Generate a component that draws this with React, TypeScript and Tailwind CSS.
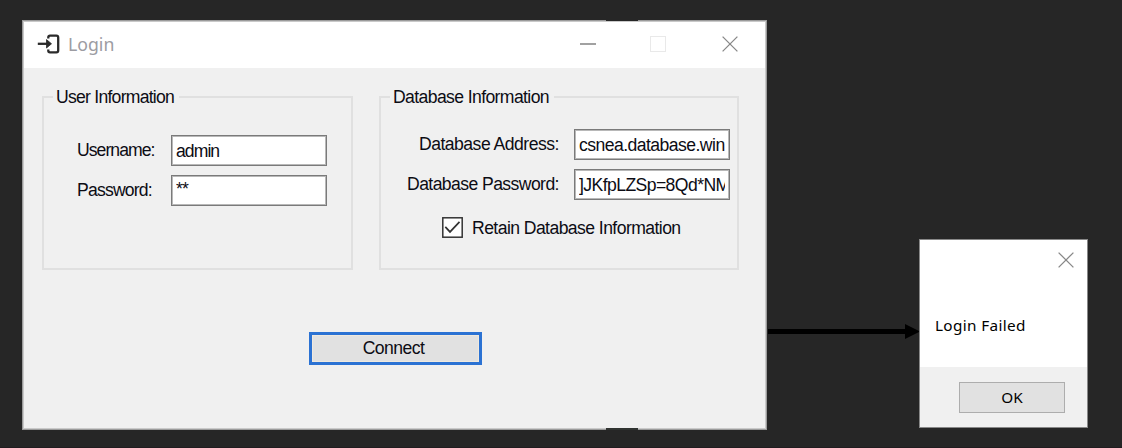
import type { ReactNode } from "react";

function CloseIcon() {
  return (
    <svg width="16" height="16" viewBox="0 0 16 16" fill="none" stroke="#888" strokeWidth="1.3">
      <path d="M.6.6 15.4 15.4M15.4.6.6 15.4" />
    </svg>
  );
}

function Group({ title, className, titleClass, children }: { title: string; className: string; titleClass: string; children: ReactNode }) {
  return (
    <section className={`relative h-[174px] border-2 border-[#e0e0e0] ${className}`}>
      <h2 className={`absolute -top-[12px] left-[9px] bg-[#f0f0f0] pl-[3px] leading-[23px] whitespace-nowrap ${titleClass}`}>{title}</h2>
      {children}
    </section>
  );
}

function Field({ label, value, labelClass, valueClass }: { label: string; value: string; labelClass: string; valueClass: string }) {
  return (
    <div className="flex h-[31px] items-center">
      <span className={`shrink-0 pb-px whitespace-nowrap ${labelClass}`}>{label}</span>
      <div className="flex h-[31px] w-[156px] shrink-0 items-center border-[1.5px] border-[#7a7a7a] bg-white px-[4px] shadow-[inset_0_0_0_1px_#b8b8b8]">
        <span className={`w-full overflow-hidden whitespace-nowrap ${valueClass}`}>{value}</span>
      </div>
    </div>
  );
}

export default function App() {
  return (
    <main className="relative h-[448px] w-[1122px] overflow-hidden bg-[#262626] font-['Liberation_Sans',Arial,sans-serif] text-[17.6px] leading-[22px] text-[#0c0c14]">
      <div className="absolute top-[20px] left-[22px] flex h-[410px] w-[745px] flex-col border border-[#9b9b9b] bg-[#f0f0f0] shadow-[inset_0_0_0_1px_#c9c9c9]">
        <header className="mx-px mt-px flex h-[46px] shrink-0 items-center bg-white pb-[3px]">
          <svg className="ml-[13px]" width="24" height="20" viewBox="0 0 24 20" fill="none" stroke="#2b2b2b" strokeWidth="2.3">
            <path d="M.8 9.8H12" />
            <path d="m9.5 5.6 5 4.2-5 4.2Z" fill="#2b2b2b" strokeWidth=".8" />
            <path d="M11.3 4.5V3.2Q11.3 1.7 13 1.7h6.4q1.8 0 1.8 1.8v13q0 1.8-1.8 1.8H13q-1.7 0-1.7-1.5v-1.3" />
          </svg>
          <h1 className="ml-[7px] w-[50px] font-['Noto_Sans',sans-serif] text-[17.7px] text-[#9c9ca2]">Login</h1>
          <svg className="ml-[462px]" width="16" height="2">
            <path d="M0 1h16" stroke="#8a8a8a" strokeWidth="1.6" />
          </svg>
          <div className="ml-[54px] size-[16px] border-[1.5px] border-[#e9e9e9]" />
          <div className="ml-[56px]"><CloseIcon /></div>
        </header>
        <div className="flex px-[19px] pt-[28px]">
          <Group title="User Information" className="w-[311px] pt-[37px] pl-[33px]" titleClass="w-[126px] tracking-[-0.75px]">
            <div className="flex flex-col gap-[9px]">
              <Field label="Username:" value="admin" labelClass="w-[94px] tracking-[-0.95px]" valueClass="tracking-[-0.95px]" />
              <Field label="Password:" value="**" labelClass="w-[94px] tracking-[-0.8px]" valueClass="pb-[4px] tracking-[-0.8px]" />
            </div>
          </Group>
          <Group title="Database Information" className="ml-[26px] w-[360px] pt-[31px]" titleClass="w-[164px] tracking-[-0.61px]" >
            <div className="flex flex-col gap-[9px]">
              <Field label="Database Address:" value="csnea.database.win" labelClass="w-[193px] pl-[38px] tracking-[-0.52px]" valueClass="tracking-[-0.55px]" />
              <Field label="Database Password:" value="]JKfpLZSp=8Qd*NM" labelClass="w-[193px] pl-[26px] tracking-[-0.58px]" valueClass="tracking-[-0.58px]" />
            </div>
            <div className="mt-[17px] flex h-[21px] items-center pl-[61px]">
              <svg width="21" height="21" viewBox="0 0 21 21" fill="none">
                <rect x=".8" y=".8" width="19.4" height="19.4" fill="#fff" stroke="#333" strokeWidth="1.5" />
                <path d="m3.3 9.8 4.7 5.1 9.5-10" stroke="#333" strokeWidth="1.7" />
              </svg>
              <span className="ml-[9px] whitespace-nowrap tracking-[-0.57px]">Retain Database Information</span>
            </div>
          </Group>
        </div>
        <button className="mt-[62px] ml-[286px] h-[33px] w-[173px] border-[3px] border-[#2b72d3] bg-[#e1e1e1] pr-[4px] text-center leading-[27px] tracking-[-0.55px] shadow-[inset_0_0_0_1px_#efe9de]">Connect</button>
      </div>
      <div className="absolute top-[19px] left-[606px] h-[2px] w-[32px] bg-[#262626]" />
      <div className="absolute top-[428px] left-[606px] h-[2px] w-[32px] bg-[#303331]" />
      <svg className="absolute top-[323px] left-[768px]" width="152" height="17" viewBox="0 0 152 17">
        <path d="M0 6h137V1l15 7.5-15 7.5v-5H0Z" fill="#000" />
      </svg>
      <div className="absolute top-[239px] left-[919px] flex h-[189px] w-[169px] flex-col border border-[#888] bg-white font-['Noto_Sans',sans-serif] text-black">
        <div className="flex h-[40px] items-center justify-end pr-[13px]"><CloseIcon /></div>
        <p className="mt-[34px] ml-[15px] whitespace-nowrap text-[15.3px] leading-[22px] tracking-[0.35px]">Login Failed</p>
        <div className="mt-auto flex h-[60px] items-center justify-end bg-[#f0f0f0] pr-[22px]">
          <button className="h-[31px] w-[106px] border-[1.5px] border-[#adadad] bg-[#e1e1e1] text-center text-[15.3px] leading-[28px]">OK</button>
        </div>
      </div>
      <div className="absolute bottom-0 left-0 h-px w-full bg-[#211c1f]" />
    </main>
  );
}
